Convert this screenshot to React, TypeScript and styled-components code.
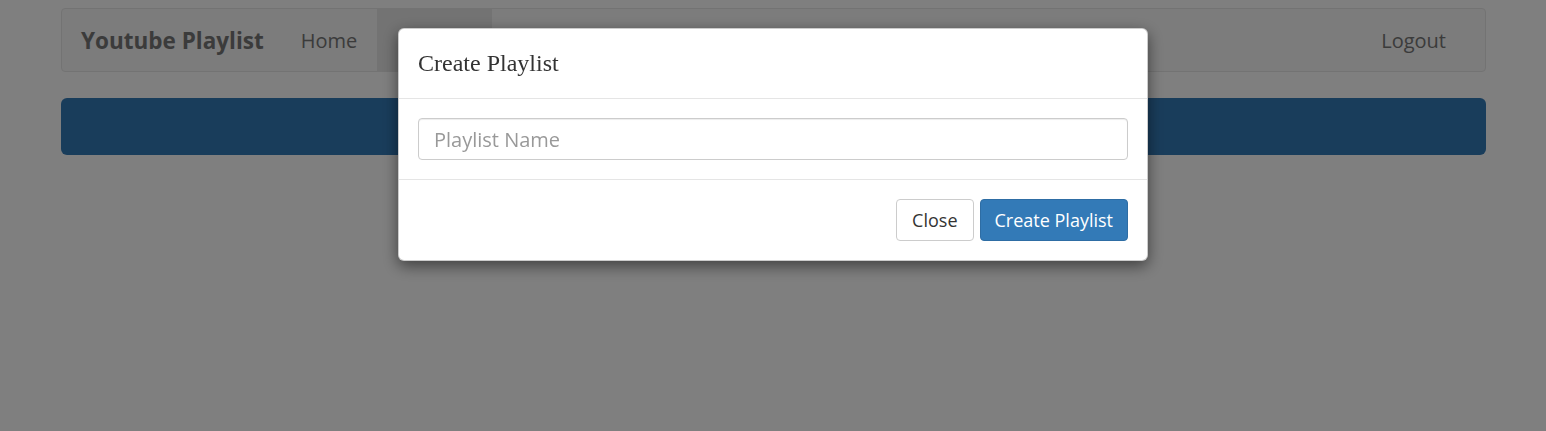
import React from 'react';
import styled, { createGlobalStyle } from 'styled-components';

const GlobalStyle = createGlobalStyle`
  html, body {
    margin: 0;
    padding: 0;
    background: #ffffff;
    font-family: "Open Sans", "Liberation Sans", sans-serif;
  }
`;

const Page = styled.div`
  padding: 8px 60px 0 61px;
  min-height: 431px;
  box-sizing: border-box;
`;

const Navbar = styled.nav`
  display: flex;
  align-items: stretch;
  height: 64px;
  box-sizing: border-box;
  background: #f8f8f8;
  border: 1px solid #e7e7e7;
  border-radius: 4px;
`;

const Brand = styled.a`
  display: flex;
  align-items: center;
  padding: 0 17px 0 19px;
  font-size: 22.5px;
  font-weight: 700;
  color: #777;
  text-decoration: none;
`;

const NavList = styled.ul<{ $right?: boolean }>`
  display: flex;
  list-style: none;
  margin: 0 ${(p) => (p.$right ? '19px' : '0')} 0 ${(p) => (p.$right ? 'auto' : '0')};
  padding: 0;
`;

const NavLink = styled.a<{ $active?: boolean }>`
  display: flex;
  align-items: center;
  height: 100%;
  padding: 0 20px;
  font-size: 20px;
  color: #777;
  text-decoration: none;
  background: ${(p) => (p.$active ? '#e7e7e7' : 'transparent')};
`;

const Banner = styled.div`
  margin-top: 26px;
  height: 57px;
  background: #337ab7;
  border-radius: 6px;
`;

const Backdrop = styled.div`
  position: fixed;
  inset: 0;
  background: rgba(0, 0, 0, 0.5);
`;

const Dialog = styled.div`
  width: 750px;
  margin: 28px auto 0;
  box-sizing: border-box;
  background: #fff;
  border: 1px solid rgba(0, 0, 0, 0.2);
  border-radius: 6px;
  box-shadow: 0 5px 15px rgba(0, 0, 0, 0.5);
`;

const DialogHeader = styled.div`
  padding: 20px 19px;
  border-bottom: 1px solid #e5e5e5;
`;

const DialogTitle = styled.h4`
  margin: 0;
  font-family: "Liberation Serif", "DejaVu Serif", serif;
  font-weight: 400;
  font-size: 24px;
  line-height: 29px;
  color: #333;
`;

const DialogBody = styled.div`
  padding: 19px;
`;

const Input = styled.input`
  display: block;
  width: 100%;
  height: 42px;
  box-sizing: border-box;
  padding: 6px 15px;
  font-family: "Open Sans", "Liberation Sans", sans-serif;
  font-size: 20px;
  color: #555;
  border: 1px solid #ccc;
  border-radius: 4px;
  box-shadow: inset 0 1px 1px rgba(0, 0, 0, 0.075);
  outline: none;

  &::placeholder {
    color: #999;
  }
`;

const DialogFooter = styled.div`
  display: flex;
  justify-content: flex-end;
  gap: 6px;
  padding: 19px;
  border-top: 1px solid #e5e5e5;
`;

const Button = styled.button<{ $primary?: boolean }>`
  height: 42px;
  padding: 0 ${(p) => (p.$primary ? '14px' : '15px')};
  font-family: "Open Sans", "Liberation Sans", sans-serif;
  font-size: 18px;
  border-radius: 4px;
  cursor: pointer;
  color: ${(p) => (p.$primary ? '#fff' : '#333')};
  background: ${(p) => (p.$primary ? '#337ab7' : '#fff')};
  border: 1px solid ${(p) => (p.$primary ? '#2e6da4' : '#ccc')};
`;

export default function App() {
  return (
    <>
      <GlobalStyle />
      <Page>
        <Navbar>
          <Brand href="#">Youtube Playlist</Brand>
          <NavList>
            <li>
              <NavLink href="#">Home</NavLink>
            </li>
            <li>
              <NavLink href="#" $active>
                Playlists
              </NavLink>
            </li>
          </NavList>
          <NavList $right>
            <li>
              <NavLink href="#">Logout</NavLink>
            </li>
          </NavList>
        </Navbar>
        <Banner />
      </Page>
      <Backdrop>
        <Dialog>
          <DialogHeader>
            <DialogTitle>Create Playlist</DialogTitle>
          </DialogHeader>
          <DialogBody>
            <Input placeholder="Playlist Name" />
          </DialogBody>
          <DialogFooter>
            <Button>Close</Button>
            <Button $primary>Create Playlist</Button>
          </DialogFooter>
        </Dialog>
      </Backdrop>
    </>
  );
}
